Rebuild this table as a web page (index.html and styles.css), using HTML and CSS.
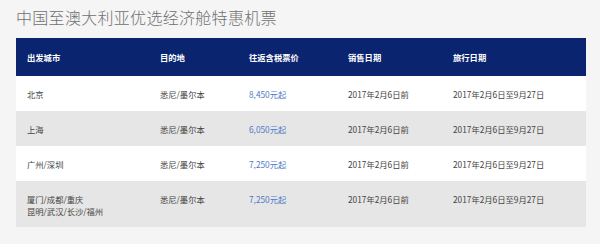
FILE: index.html
```html
<!DOCTYPE html>
<html lang="zh">
<head>
<meta charset="utf-8">
<link rel="stylesheet" href="styles.css">
</head>
<body>
<div class="page">
  <h1 class="title">中国至澳大利亚优选经济舱特惠机票</h1>
  <div class="table">
    <div class="row head">
      <div class="cell">出发城市</div>
      <div class="cell">目的地</div>
      <div class="cell">往返含税票价</div>
      <div class="cell">销售日期</div>
      <div class="cell">旅行日期</div>
    </div>
    <div class="row">
      <div class="cell">北京</div>
      <div class="cell">悉尼/墨尔本</div>
      <div class="cell price">8,450元起</div>
      <div class="cell">2017年2月6日前</div>
      <div class="cell">2017年2月6日至9月27日</div>
    </div>
    <div class="row alt">
      <div class="cell">上海</div>
      <div class="cell">悉尼/墨尔本</div>
      <div class="cell price">6,050元起</div>
      <div class="cell">2017年2月6日前</div>
      <div class="cell">2017年2月6日至9月27日</div>
    </div>
    <div class="row">
      <div class="cell">广州/深圳</div>
      <div class="cell">悉尼/墨尔本</div>
      <div class="cell price">7,250元起</div>
      <div class="cell">2017年2月6日前</div>
      <div class="cell">2017年2月6日至9月27日</div>
    </div>
    <div class="row alt tall">
      <div class="cell">厦门/成都/重庆<br>昆明/武汉/长沙/福州</div>
      <div class="cell">悉尼/墨尔本</div>
      <div class="cell price">7,250元起</div>
      <div class="cell">2017年2月6日前</div>
      <div class="cell">2017年2月6日至9月27日</div>
    </div>
  </div>
</div>
</body>
</html>
```

FILE: styles.css
```css
html, body {
  margin: 0;
  padding: 0;
  background: #f5f5f5;
}
.page {
  width: 600px;
  height: 244px;
  padding: 0 14px 0 16px;
  box-sizing: border-box;
  font-family: "Noto Sans CJK SC", "Noto Sans", sans-serif;
}
.title {
  margin: 0;
  padding-top: 6px;
  height: 32px;
  box-sizing: border-box;
  font-size: 16px;
  line-height: 22px;
  font-weight: 300;
  letter-spacing: 0.3px;
  color: #707070;
}
.table {
  width: 570px;
  margin-top: 6px;
}
.row {
  display: grid;
  grid-template-columns: 133px 89px 99px 105px 144px;
  height: 35px;
  align-items: center;
  background: #ffffff;
  font-size: 8.3px;
  color: #444;
}
.row.alt {
  background: #e6e6e6;
}
.row.head {
  height: 38px;
  background: #0b2470;
  color: #ffffff;
  font-weight: 700;
}
.row.tall {
  height: 46px;
  align-items: start;
  padding-top: 12px;
  box-sizing: border-box;
  line-height: 12px;
}
.cell {
  padding-left: 11px;
  white-space: nowrap;
}
.price {
  color: #4d7cc6;
}
```
